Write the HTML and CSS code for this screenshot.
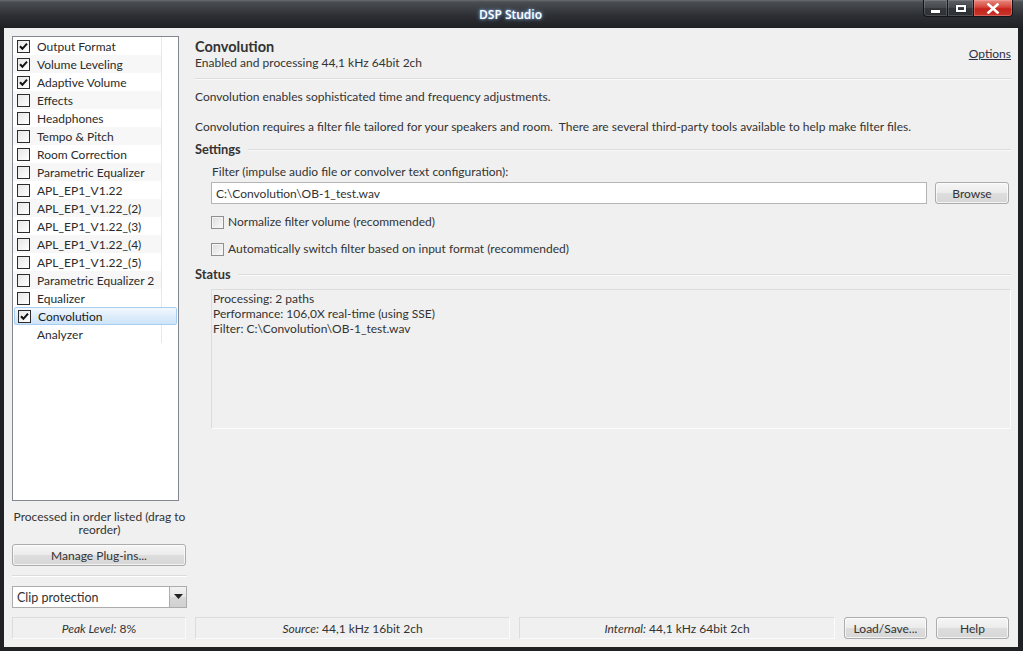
FILE: index.html
```html
<!DOCTYPE html>
<html>
<head>
<meta charset="utf-8">
<title>DSP Studio</title>
<link rel="stylesheet" href="styles.css">
</head>
<body>
<div class="window">
  <div class="titlebar">
    <span class="title">DSP Studio</span>
    <div class="winbtns">
      <div class="wb wb-min"><span class="min-glyph"></span></div>
      <div class="wb wb-max"><span class="max-glyph"></span></div>
      <div class="wb wb-close">
        <svg width="14" height="11" viewBox="0 0 14 11"><path d="M2.5 1.5 L11.5 9.5 M11.5 1.5 L2.5 9.5" stroke="#fff" stroke-width="2.6" stroke-linecap="square"/></svg>
      </div>
    </div>
  </div>
  <div class="client">
    <div class="main">
      <div class="sidebar">
        <div class="list">
          <div class="row"><span class="cb checked"><svg viewBox="0 0 13 13" width="13" height="13"><path d="M3 6.2 L5.4 8.8 L10 3.6" fill="none" stroke="#111" stroke-width="2"/></svg></span><span class="lbl">Output Format</span></div>
          <div class="row"><span class="cb checked"><svg viewBox="0 0 13 13" width="13" height="13"><path d="M3 6.2 L5.4 8.8 L10 3.6" fill="none" stroke="#111" stroke-width="2"/></svg></span><span class="lbl">Volume Leveling</span></div>
          <div class="row"><span class="cb checked"><svg viewBox="0 0 13 13" width="13" height="13"><path d="M3 6.2 L5.4 8.8 L10 3.6" fill="none" stroke="#111" stroke-width="2"/></svg></span><span class="lbl">Adaptive Volume</span></div>
          <div class="row"><span class="cb"></span><span class="lbl">Effects</span></div>
          <div class="row"><span class="cb"></span><span class="lbl">Headphones</span></div>
          <div class="row"><span class="cb"></span><span class="lbl">Tempo &amp; Pitch</span></div>
          <div class="row"><span class="cb"></span><span class="lbl">Room Correction</span></div>
          <div class="row"><span class="cb"></span><span class="lbl">Parametric Equalizer</span></div>
          <div class="row"><span class="cb"></span><span class="lbl">APL_EP1_V1.22</span></div>
          <div class="row"><span class="cb"></span><span class="lbl">APL_EP1_V1.22_(2)</span></div>
          <div class="row"><span class="cb"></span><span class="lbl">APL_EP1_V1.22_(3)</span></div>
          <div class="row"><span class="cb"></span><span class="lbl">APL_EP1_V1.22_(4)</span></div>
          <div class="row"><span class="cb"></span><span class="lbl">APL_EP1_V1.22_(5)</span></div>
          <div class="row"><span class="cb"></span><span class="lbl">Parametric Equalizer 2</span></div>
          <div class="row"><span class="cb"></span><span class="lbl">Equalizer</span></div>
          <div class="row selected"><span class="cb checked"><svg viewBox="0 0 13 13" width="13" height="13"><path d="M3 6.2 L5.4 8.8 L10 3.6" fill="none" stroke="#111" stroke-width="2"/></svg></span><span class="lbl">Convolution</span></div>
          <div class="row"><span class="cb none"></span><span class="lbl">Analyzer</span></div>
        </div>
        <div class="note">Processed in order listed (drag to reorder)</div>
        <div class="btn btn-manage">Manage Plug-ins...</div>
        <div class="hsep"></div>
        <div class="combo">
          <div class="combo-text">Clip protection</div>
          <div class="combo-arrow"><svg width="9" height="6" viewBox="0 0 9 6"><path d="M0 0 H9 L4.5 5 Z" fill="#222"/></svg></div>
        </div>
      </div>
      <div class="panel">
        <div class="header">
          <div class="header-text">
            <div class="h-title">Convolution</div>
            <div class="h-sub">Enabled and processing 44,1 kHz 64bit 2ch</div>
          </div>
          <a class="options">Options</a>
        </div>
        <div class="sep"></div>
        <p class="desc1">Convolution enables sophisticated time and frequency adjustments.</p>
        <p class="desc2">Convolution requires a filter file tailored for your speakers and room.&nbsp; There are several third-party tools available to help make filter files.</p>
        <div class="group-title"><span>Settings</span><div class="gline"></div></div>
        <div class="indent">
          <div class="field-label">Filter (impulse audio file or convolver text configuration):</div>
          <div class="field-row">
            <div class="input">C:\Convolution\OB-1_test.wav</div>
            <div class="btn btn-browse">Browse</div>
          </div>
          <div class="check-row first"><span class="cb2"></span><span>Normalize filter volume (recommended)</span></div>
          <div class="check-row second"><span class="cb2"></span><span>Automatically switch filter based on input format (recommended)</span></div>
        </div>
        <div class="group-title status-title"><span>Status</span><div class="gline"></div></div>
        <div class="indent">
          <div class="status-box">
            <div>Processing: 2 paths</div>
            <div>Performance: 106,0X real-time (using SSE)</div>
            <div>Filter: C:\Convolution\OB-1_test.wav</div>
          </div>
        </div>
      </div>
    </div>
    <div class="statusbar">
      <div class="sb sb-peak"><i>Peak Level:</i>&nbsp;8%</div>
      <div class="sb sb-source"><i>Source:</i>&nbsp;44,1 kHz 16bit 2ch</div>
      <div class="sb sb-internal"><i>Internal:</i>&nbsp;44,1 kHz 64bit 2ch</div>
      <div class="btn btn-load">Load/Save...</div>
      <div class="btn btn-help">Help</div>
    </div>
  </div>
</div>
</body>
</html>
```
FILE: styles.css
```css
* { box-sizing: border-box; }
html, body { margin: 0; padding: 0; }
body {
  width: 1023px; height: 651px; overflow: hidden;
  background: #1f2125;
  font-family: "Lato", "Open Sans", sans-serif;
  font-size: 12px;
  color: #333;
}
.window {
  width: 1023px; height: 651px;
  display: flex; flex-direction: column;
  background: #1f2125;
}
.titlebar {
  height: 28px; flex: none;
  position: relative;
  display: flex; align-items: center; justify-content: center;
  background: linear-gradient(#6a6d72 0, #4a4d52 2px, #3d4045 8px, #2c2e33 16px, #202226 27px, #1c1e22 28px);
}
.title {
  color: #fff;
  font-family: "Open Sans", sans-serif;
  font-size: 12px;
  font-weight: 600;
  margin-left: -2px;
  text-shadow: 0 0 4px rgba(150, 200, 255, 0.9), 0 0 2px rgba(120, 180, 255, 0.8);
}
.winbtns {
  position: absolute; top: 0; right: 10px;
  display: flex; height: 17px;
}
.wb {
  height: 17px;
  border: 1px solid #141517;
  border-top: none;
  display: flex; align-items: center; justify-content: center;
}
.wb-min, .wb-max {
  width: 25px;
  background: linear-gradient(#5d6065, #45484d 50%, #34373b 51%, #2d3034);
  box-shadow: inset 0 0 0 1px rgba(255,255,255,0.15);
}
.wb-min { border-radius: 0 0 0 4px; border-right: none; width: 24px; }
.wb-max { width: 26px; border-right: none; }
.min-glyph { width: 9px; height: 3px; background: #fff; margin-top: 6px; box-shadow: 0 0 1px #000; }
.max-glyph { width: 10px; height: 7px; border: 2px solid #fff; border-top-width: 2px; box-shadow: 0 0 1px #000; }
.wb-close {
  width: 40px;
  border-radius: 0 0 4px 0;
  background: linear-gradient(#e88a80, #d6453a 45%, #c4231a 55%, #c8372c);
  box-shadow: inset 0 0 0 1px rgba(255,200,200,0.3);
}
.client {
  flex: 1;
  margin: 0 5px 5px 4px;
  background: #f0f0f0;
  display: flex; flex-direction: column;
  padding: 8px 7px 8px 8px;
}
.main { flex: 1; display: flex; gap: 8px; min-height: 0; }
.sidebar { width: 175px; flex: none; display: flex; flex-direction: column; }
.list {
  width: 167px; height: 465px;
  border: 1px solid #828790;
  background: #fff linear-gradient(#e8e8e8, #e8e8e8) no-repeat 148px 0 / 1px 306px;
}
.row {
  height: 18px;
  display: flex; align-items: center;
  padding-left: 4px;
  width: 148px;
  color: #2b2b2b;
}
.row:nth-child(even) { background: #f7f7f7; }
.row.selected {
  width: auto;
  margin: 0 1px;
  padding-left: 3px;
  border: 1px solid #a8cdf1;
  border-radius: 2px;
  background: linear-gradient(#f3f8fe, #dbebfb 60%, #cde4f9);
  color: #1a1a1a;
}
.cb {
  width: 13px; height: 13px; flex: none;
  border: 1px solid #2c2c2c;
  background: linear-gradient(135deg, #e6e6e6, #fff);
  margin-right: 7px;
  position: relative;
}
.cb svg { position: absolute; left: -1px; top: -1px; }
.cb.none { border: none; background: none; }
.note {
  margin: 9px -4px 0;
  text-align: center;
  line-height: 13px;
}
.btn {
  height: 22px;
  border: 1px solid #acacac;
  border-radius: 3px;
  background: linear-gradient(#f6f6f6, #ebebeb 50%, #dddddd 51%, #d7d7d7);
  box-shadow: inset 0 0 0 1px rgba(255,255,255,0.7);
  display: flex; align-items: center; justify-content: center;
  color: #333;
}
.btn-manage { margin-top: 8px; width: 174px; }
.hsep { margin-top: 9px; height: 2px; border-top: 1px solid #dcdcdc; border-bottom: 1px solid #fff; }
.combo {
  margin-top: 9px;
  width: 175px; height: 22px;
  display: flex;
  border: 1px solid #acacac;
  background: #fff;
}
.combo-text { flex: 1; display: flex; align-items: center; padding-left: 4px; font-size: 12.5px; }
.combo-arrow {
  width: 17px;
  border-left: 1px solid #acacac;
  background: linear-gradient(#f2f2f2, #e6e6e6 50%, #d8d8d8 51%, #d0d0d0);
  display: flex; align-items: center; justify-content: center;
}
.panel { flex: 1; display: flex; flex-direction: column; min-width: 0; }
.header { display: flex; align-items: center; justify-content: space-between; padding-top: 3px; }
.h-title { font-weight: bold; line-height: 16px; font-size: 14.5px; color: #333; }
.h-sub { line-height: 16px; }
.options { text-decoration: underline; color: #2d2d45; line-height: 16px; margin-top: -3px; }
.sep { margin-top: 7px; height: 2px; border-top: 1px solid #dcdcdc; border-bottom: 1px solid #fafafa; }
p { margin: 0; line-height: 16px; }
.desc1 { margin-top: 9px; }
.desc2 { margin-top: 14px; }
.group-title {
  margin-top: 6px;
  display: flex; align-items: center;
  font-weight: bold; line-height: 16px;
  font-size: 12.8px;
}
.gline { flex: 1; margin-left: 7px; margin-top: 1px; height: 2px; border-top: 1px solid #dcdcdc; border-bottom: 1px solid #fafafa; }
.indent { padding-left: 16px; }
.field-label { margin-top: 7px; line-height: 16px; padding-left: 1px; }
.field-row { margin-top: 2px; display: flex; gap: 8px; }
.input {
  flex: 1; height: 22px;
  border: 1px solid #b5b5b5;
  background: #fff;
  padding-left: 4px;
  display: flex; align-items: center;
}
.btn-browse { width: 74px; flex: none; margin-right: 2px; }
.check-row { display: flex; align-items: center; line-height: 16px; }
.check-row.first { margin-top: 10px; }
.check-row.second { margin-top: 11px; }
.cb2 {
  width: 13px; height: 13px; flex: none;
  border: 1px solid #8e8f8f;
  background: linear-gradient(135deg, #dcdcdc, #fbfbfb);
  box-shadow: inset 0 0 0 1px #f4f4f4;
  margin-right: 4px;
}
.status-title { margin-top: 9px; }
.status-box {
  margin-top: 7px;
  height: 140px;
  border: 1px solid #dcdcdc;
  border-right-color: #fcfcfc;
  border-bottom-color: #fcfcfc;
  padding: 1px 0 0 1px;
  line-height: 15px;
}
.statusbar {
  margin-top: 9px; height: 22px; flex: none;
  display: flex; gap: 9px;
}
.sb {
  height: 22px;
  border: 1px solid #dcdcdc;
  border-right-color: #fbfbfb;
  border-bottom-color: #fbfbfb;
  display: flex; align-items: center; justify-content: center;
}
.sb i { font-style: italic; }
.sb-peak { width: 174px; }
.sb-source { width: 315px; }
.sb-internal { width: 316px; }
.btn-load { width: 83px; }
.btn-help { width: 73px; }
```
